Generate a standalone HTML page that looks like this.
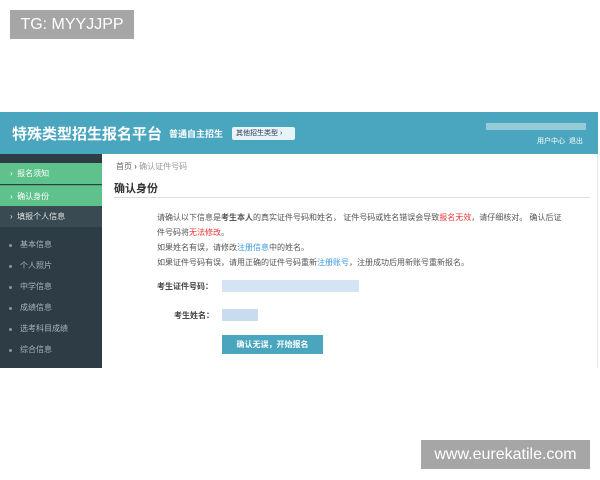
<!DOCTYPE html>
<html><head><meta charset="utf-8"><style>
*{margin:0;padding:0;box-sizing:border-box}
body{width:600px;height:480px;background:#fff;position:relative;overflow:hidden;font-family:"Liberation Sans","Noto Sans CJK SC",sans-serif}
.abs{position:absolute}
.tag{left:10px;top:10px;width:124px;height:29px;background:#a6a6a6;color:#fff;font-size:16px;line-height:29px;text-align:center}
.wm{left:421px;top:440px;width:169px;height:29px;background:#a6a6a6;color:#fff;font-size:16px;line-height:29px;text-align:center}
.hdr{left:0;top:112px;width:598px;height:42px;background:#4aa6bf}
.side{left:0;top:154px;width:102px;height:214px;background:#2e3c45}
.main{left:102px;top:154px;width:496px;height:214px;background:#fff;border-right:1px solid #e4e4e4}
.t{font-size:9px;color:#555;white-space:nowrap}
.si{position:absolute;left:0;width:102px;height:21px;font-size:8px;color:#fff;line-height:21px;padding-left:10px}
.sub{position:absolute;left:10px;font-size:8px;color:#aab4ba}
.sub:before{content:"";position:absolute;left:-1px;top:5px;width:3px;height:3px;background:#8a969d;border-radius:50%}
</style></head><body>
<div class="abs tag">TG: MYYJJPP</div>
<div class="abs hdr">
 <div class="abs" style="left:12px;top:11px;color:#fff;font-size:15px;font-weight:bold">特殊类型招生报名平台</div>
 <div class="abs" style="left:169px;top:15px;color:#fff;font-size:9px;font-weight:bold">普通自主招生</div>
 <div class="abs" style="left:232px;top:15px;width:63px;height:13px;background:#e6f3f7;border-radius:2px;font-size:7px;color:#335;line-height:13px;padding-left:4px">其他招生类型 ›</div>
 <div class="abs" style="left:486px;top:11px;width:100px;height:7px;background:#a8d3e0;opacity:.8"></div>
 <div class="abs" style="left:537px;top:24px;color:#fff;font-size:7px">用户中心 &nbsp;退出</div>
</div>
<div class="abs side">
 <div class="si" style="top:9px;background:#5fc28c">›&nbsp; 报名须知</div>
 <div class="si" style="top:31px;background:#5fc28c;border-top:1px solid #4ea87a">›&nbsp; 确认身份</div>
 <div class="si" style="top:52px;background:#3a4a53;color:#dfe5e8">›&nbsp; 填报个人信息</div>
 <div class="sub" style="top:85px;padding-left:10px">基本信息</div>
 <div class="sub" style="top:106px;padding-left:10px">个人照片</div>
 <div class="sub" style="top:127px;padding-left:10px">中学信息</div>
 <div class="sub" style="top:148px;padding-left:10px">成绩信息</div>
 <div class="sub" style="top:169px;padding-left:10px">选考科目成绩</div>
 <div class="sub" style="top:190px;padding-left:10px">综合信息</div>
</div>
<div class="abs main">
 <div class="abs t" style="left:14px;top:7px;font-size:8px;color:#666">首页 <b>›</b> <span style="color:#999">确认证件号码</span></div>
 <div class="abs" style="left:12px;top:26px;font-size:11px;color:#333;font-weight:bold">确认身份</div>
 <div class="abs" style="left:12px;top:43px;width:476px;height:1px;background:#ddd"></div>
 <div class="abs t" style="left:55px;top:56px;font-size:8px;line-height:15px">请确认以下信息是<b>考生本人</b>的真实证件号码和姓名， 证件号码或姓名错误会导致<span style="color:#e33">报名无效</span>，请仔细核对。 确认后证<br>件号码将<span style="color:#e33">无法修改</span>。<br>如果姓名有误，请修改<span style="color:#3a9be0">注册信息</span>中的姓名。<br>如果证件号码有误，请用正确的证件号码重新<span style="color:#3a9be0">注册账号</span>，注册成功后用新账号重新报名。</div>
 <div class="abs t" style="left:55px;top:127px;font-size:8px;font-weight:bold;color:#444">考生证件号码：</div>
 <div class="abs" style="left:120px;top:126px;width:137px;height:12px;background:#d5e4f4"></div>
 <div class="abs t" style="left:72px;top:156px;font-size:8px;font-weight:bold;color:#444">考生姓名：</div>
 <div class="abs" style="left:120px;top:155px;width:36px;height:12px;background:#c9dcef"></div>
 <div class="abs" style="left:120px;top:181px;width:101px;height:19px;background:#4aa6bf;color:#fff;font-size:8px;font-weight:bold;text-align:center;line-height:19px">确认无误，开始报名</div>
</div>
<div class="abs wm">www.eurekatile.com</div>
</body></html>
